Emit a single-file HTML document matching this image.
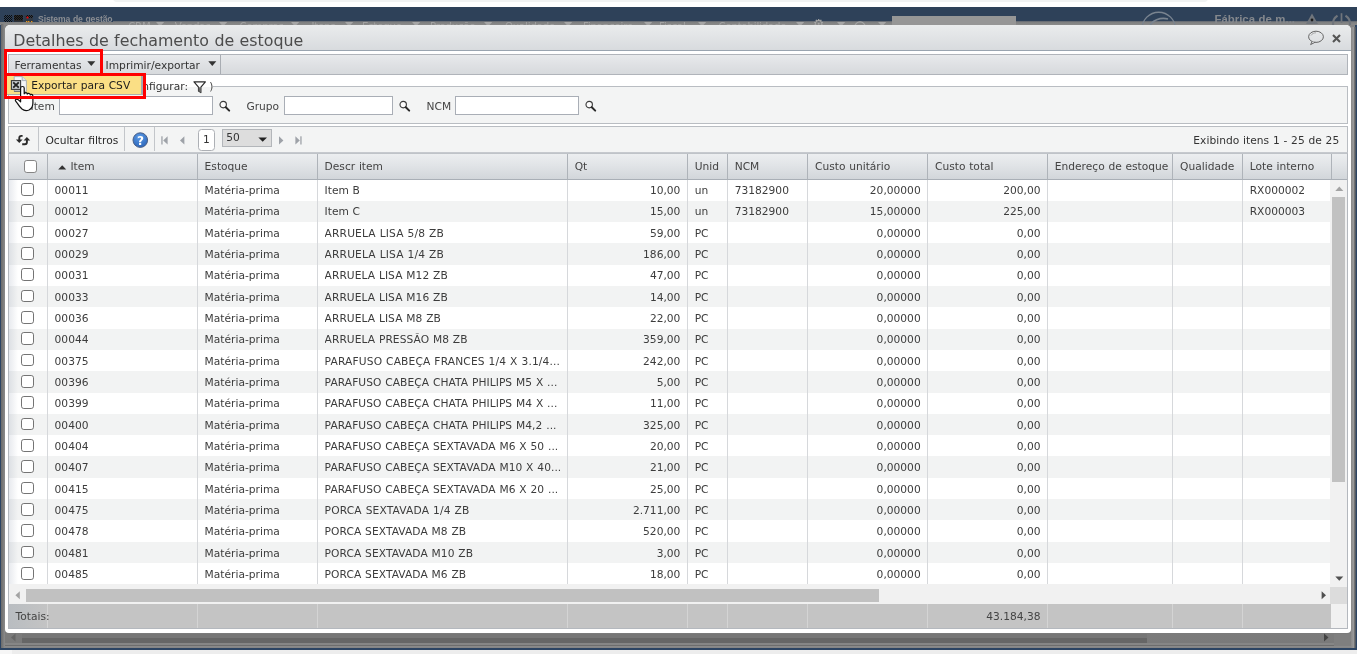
<!DOCTYPE html>
<html lang="pt-BR"><head><meta charset="utf-8"><title>Detalhes de fechamento de estoque</title>
<style>
html,body{margin:0;padding:0}
body{width:1357px;height:654px;overflow:hidden;position:relative;background:#fff;font-family:"DejaVu Sans","Liberation Sans",sans-serif;font-size:10.67px;word-spacing:.36px;color:#3c3c3c}
.abs,.abs *{position:absolute}
div{position:absolute;box-sizing:border-box;white-space:nowrap}
svg{position:absolute;overflow:visible}
.t{line-height:14px;height:14px}
.cell{height:22.8px;line-height:22.8px;overflow:hidden}
.vl{width:1px;background:#d6d8db}
.cb{width:12.9px;height:12.6px;border:1.2px solid #747474;border-radius:2.8px;background:#fff}
.hsep{width:1px;background:#c3c6ca}
</style></head><body>
<div id="wrap" style="left:0;top:0;width:1357px;height:654px;will-change:transform">

<div style="left:0;top:0;width:1357px;height:7px;background:#fff"></div>
<div style="left:113px;top:-6px;width:1095px;height:7.8px;background:#f1f3f3;border-radius:6px"></div>
<div style="left:0;top:6.8px;width:1357px;height:643.2px;background:#2c4463"></div>
<div style="left:1.3px;top:6.8px;width:1354px;height:641.6px;background:#848484"></div>
<div id="topbar" style="left:0;top:6.8px;width:1357px;height:13.8px;background:#2e4159"></div>
<div style="left:0;top:20.5px;width:1357px;height:4.5px;background:linear-gradient(#59616d,#7e7f80 28%,#8b8b8b)"></div>
<div style="left:0;top:20px;width:113px;height:2.4px;background:#2e4159"></div>
<div style="left:38px;top:13px;font-size:8.6px;line-height:12px;color:#8b8e93;font-family:'Liberation Sans',sans-serif;font-weight:bold;letter-spacing:-0.1px">Sistema de gestão</div>
<svg style="left:3px;top:8px" width="32" height="16" viewBox="3 8 32 16"><defs><pattern id="dt" width="2" height="2" patternUnits="userSpaceOnUse"><rect width="1" height="1" fill="#0c0c0c"/><rect x="1" y="1" width="1" height="1" fill="#0c0c0c"/></pattern></defs><rect x="4" y="15" width="8.4" height="7" fill="url(#dt)"/><rect x="14" y="15" width="9" height="6.6" fill="#2a2a2a"/><rect x="14" y="15" width="9" height="5" fill="url(#dt)"/><rect x="24.4" y="15" width="8.6" height="7" fill="#333a44"/><rect x="26" y="15" width="7" height="3" fill="url(#dt)"/><rect x="26.6" y="16.6" width="1.8" height="1.8" fill="#f00"/><rect x="26" y="21" width="1.4" height="1.2" fill="#e8981c"/><rect x="28" y="21" width="1.4" height="1.2" fill="#e8981c"/><rect x="31" y="21" width="1.4" height="1.2" fill="#e8981c"/></svg>
<div style="left:128.2px;top:20px;font-size:10.2px;line-height:13px;color:#a2a2a2;letter-spacing:-0.2px">CRM</div>
<svg style="left:155.8px;top:22px" width="9" height="6"><path d="M0 0 H8.2 L4.1 4.6Z" fill="#a6a6a6"/></svg>
<div style="left:174.8px;top:20px;font-size:10.2px;line-height:13px;color:#a2a2a2;letter-spacing:-0.2px">Vendas</div>
<svg style="left:219.2px;top:22px" width="9" height="6"><path d="M0 0 H8.2 L4.1 4.6Z" fill="#a6a6a6"/></svg>
<div style="left:239.6px;top:20px;font-size:10.2px;line-height:13px;color:#a2a2a2;letter-spacing:-0.2px">Compras</div>
<svg style="left:291.2px;top:22px" width="9" height="6"><path d="M0 0 H8.2 L4.1 4.6Z" fill="#a6a6a6"/></svg>
<div style="left:311.4px;top:20px;font-size:10.2px;line-height:13px;color:#a2a2a2;letter-spacing:-0.2px">Itens</div>
<svg style="left:345px;top:22px" width="9" height="6"><path d="M0 0 H8.2 L4.1 4.6Z" fill="#a6a6a6"/></svg>
<div style="left:362px;top:20px;font-size:10.2px;line-height:13px;color:#a2a2a2;letter-spacing:-0.2px">Estoque</div>
<svg style="left:411.5px;top:22px" width="9" height="6"><path d="M0 0 H8.2 L4.1 4.6Z" fill="#a6a6a6"/></svg>
<div style="left:430px;top:20px;font-size:10.2px;line-height:13px;color:#a2a2a2;letter-spacing:-0.2px">Produção</div>
<svg style="left:484px;top:22px" width="9" height="6"><path d="M0 0 H8.2 L4.1 4.6Z" fill="#a6a6a6"/></svg>
<div style="left:505px;top:20px;font-size:10.2px;line-height:13px;color:#a2a2a2;letter-spacing:-0.2px">Qualidade</div>
<svg style="left:564px;top:22px" width="9" height="6"><path d="M0 0 H8.2 L4.1 4.6Z" fill="#a6a6a6"/></svg>
<div style="left:583px;top:20px;font-size:10.2px;line-height:13px;color:#a2a2a2;letter-spacing:-0.2px">Financeiro</div>
<svg style="left:643.8px;top:22px" width="9" height="6"><path d="M0 0 H8.2 L4.1 4.6Z" fill="#a6a6a6"/></svg>
<div style="left:659px;top:20px;font-size:10.2px;line-height:13px;color:#a2a2a2;letter-spacing:-0.2px">Fiscal</div>
<svg style="left:698.4px;top:22px" width="9" height="6"><path d="M0 0 H8.2 L4.1 4.6Z" fill="#a6a6a6"/></svg>
<div style="left:718.5px;top:20px;font-size:10.2px;line-height:13px;color:#a2a2a2;letter-spacing:-0.2px">Contabilidade</div>
<svg style="left:796px;top:22px" width="9" height="6"><path d="M0 0 H8.2 L4.1 4.6Z" fill="#a6a6a6"/></svg>
<div style="left:813px;top:17.4px;font-size:12.5px;line-height:13px;color:#a6a6a6">⚙</div>
<svg style="left:837.3px;top:22px" width="9" height="6"><path d="M0 0 H8.2 L4.1 4.6Z" fill="#a6a6a6"/></svg>
<svg style="left:854.4px;top:20.5px" width="12" height="12"><circle cx="6" cy="6" r="5.2" fill="none" stroke="#a6a6a6" stroke-width="1.2"/></svg>
<svg style="left:877.5px;top:22px" width="9" height="6"><path d="M0 0 H8.2 L4.1 4.6Z" fill="#a6a6a6"/></svg>
<div style="left:892px;top:16.2px;width:123.8px;height:14px;background:#969696"></div>
<div style="left:1214.5px;top:12px;font-size:11.4px;line-height:14px;color:#85888d;font-family:'Liberation Sans',sans-serif;font-weight:bold">Fábrica de m...</div>
<svg style="left:1141px;top:11px" width="36" height="20"><circle cx="17.7" cy="18" r="16.8" fill="none" stroke="#7a8490" stroke-width="1.4"/><path d="M8 17 C10 9 20 6 27 8" fill="none" stroke="#7a8490" stroke-width="1.6"/></svg>
<svg style="left:1300px;top:11px" width="56" height="16"><path d="M6 13 L12 2.6 L18 13 Z" fill="#70757c"/><circle cx="12" cy="9" r="1.4" fill="#1c1c1c"/><path d="M37.5 4.6 A10 10 0 0 0 33 14 M45.5 4.6 A10 10 0 0 1 50 14" fill="none" stroke="#70757c" stroke-width="2.2"/><path d="M41.5 2.2 V12" stroke="#70757c" stroke-width="1.7"/></svg>
<div style="left:0;top:650px;width:1357px;height:5px;background:#ededed"></div>
<div style="left:0;top:650px;width:12px;height:5px;background:#f6f6f6"></div>
<div style="left:1.3px;top:630px;width:1353.4px;height:18.4px;background:linear-gradient(#7c7c7c,#7a7a7a 70%,#868686 74%,#868686 84%,#6c6c6c 86%,#8a8a8a 90%,#8a8a8a 97%,#4a4a4a)"></div>
<div style="left:22px;top:637.7px;width:1125px;height:5.2px;background:#666"></div>
<div style="left:22px;top:634px;width:1125px;height:3.7px;background:#767676"></div>
<div style="left:1334px;top:634px;width:17px;height:12px;background:#7f7f7f"></div>
<svg style="left:10px;top:633px" width="8" height="10"><path d="M5.5 0.5 L1 4.5 L5.5 8.5Z" fill="#666"/></svg>
<svg style="left:1323px;top:632.5px" width="8" height="10"><path d="M1 0.5 L5.5 4.5 L1 8.5Z" fill="#444"/></svg>
<div style="left:1.3px;top:24px;width:3.8px;height:624px;background:linear-gradient(90deg,#6a6a6a,#8c8c8c)"></div>
<div style="left:1351.2px;top:27px;width:4.4px;height:621px;background:linear-gradient(90deg,#888,#9a9a9a 55%,#5c5c5c 78%,#46566b)"></div>
<div id="dlg" style="left:5px;top:24.6px;width:1346.3px;height:608.2px;background:#fff;border-radius:5px 5px 4px 4px;overflow:hidden">
<div style="left:0;top:0;width:1347px;height:25.4px;background:linear-gradient(#eaeced,#e3e5e7 40%,#d8dbde)"></div>
<div style="left:0;top:25.2px;width:1347px;height:1.2px;background:#9aa5b0"></div>
</div>
<div style="left:13.2px;top:30.5px;font-size:15.85px;line-height:20px;color:#4c4c4c">Detalhes de fechamento de estoque</div>
<svg style="left:1307px;top:30px" width="18" height="16" viewBox="0 0 18 16"><ellipse cx="9" cy="6.8" rx="7.4" ry="5.6" fill="none" stroke="#666" stroke-width="1"/><path d="M5.2 11.4 L3.6 14.6 L8.2 12.2" fill="#e6e8ea" stroke="#666" stroke-width="1" stroke-linejoin="round"/><path d="M4 5.5 C5 3.6 7 2.8 9 2.8" fill="none" stroke="#999" stroke-width=".8"/></svg>
<svg style="left:1331.5px;top:33.5px" width="9" height="9" viewBox="0 0 9 9"><path d="M1 1 L8 8 M8 1 L1 8" stroke="#555" stroke-width="2.1"/></svg>
<div style="left:8.2px;top:54px;width:1340px;height:20.6px;border:1px solid #b0b4ba;background:linear-gradient(#e8eaec,#dfe1e4 50%,#d7dadd)"></div>
<div class="t" style="left:14.4px;top:58.6px;color:#333">Ferramentas</div>
<svg style="left:87px;top:61px" width="9" height="6"><path d="M0.3 0.3 H8.3 L4.3 5Z" fill="#333"/></svg>
<div class="hsep" style="left:99.5px;top:55px;height:19px;background:#a9adb3"></div>
<div class="t" style="left:105.6px;top:58.6px;color:#333">Imprimir/exportar</div>
<svg style="left:207.5px;top:61px" width="9" height="6"><path d="M0.3 0.3 H8.3 L4.3 5Z" fill="#333"/></svg>
<div class="hsep" style="left:220px;top:55px;height:19px;background:#a9adb3"></div>
<div style="left:8.2px;top:86.4px;width:1340px;height:37.2px;border:1px solid #b9bdc2;background:#f3f4f4"></div>
<div class="t" style="right:1167px;top:79.8px;width:180px;text-align:right;background:linear-gradient(#fff 0,#fff 7.4px,#f3f4f4 7.4px);padding:0 2px;color:#333">Filtros (configurar:</div>
<div class="t" style="left:190px;top:79.8px;width:23.4px;text-align:right;background:linear-gradient(#fff 0,#fff 7.4px,#f3f4f4 7.4px);color:#444">)</div>
<svg style="left:193.2px;top:79.6px" width="14" height="14" viewBox="0 0 14 14"><path d="M1 1.8 H12.4 L7.9 7.2 V12.6 L5.5 11 V7.2 Z" fill="#fff" stroke="#2a2a2a" stroke-width="1.15" stroke-linejoin="round"/><path d="M5.5 7.2 H7.9 V12.6 L5.5 11Z" fill="#666"/></svg>
<div class="t" style="left:30.5px;top:100px;color:#444">Item</div>
<div style="left:59px;top:96.2px;width:154px;height:19.2px;border:1px solid #a9aeb6;background:#fff"></div>
<div class="t" style="left:246.4px;top:100px;color:#444">Grupo</div>
<div style="left:284.2px;top:96.2px;width:108.8px;height:19.2px;border:1px solid #a9aeb6;background:#fff"></div>
<div class="t" style="left:426.6px;top:100px;color:#444">NCM</div>
<div style="left:455.2px;top:96.2px;width:123.8px;height:19.2px;border:1px solid #a9aeb6;background:#fff"></div>
<svg style="left:218.6px;top:100.2px" width="12" height="12" viewBox="0 0 12 12"><circle cx="4.2" cy="4.6" r="3.2" fill="#fdfdfd" stroke="#3c3c3c" stroke-width="1.15"/><path d="M6.8 7.2 L10.2 10.6" stroke="#2a2a2a" stroke-width="2" stroke-linecap="round"/></svg>
<svg style="left:398.8px;top:100.2px" width="12" height="12" viewBox="0 0 12 12"><circle cx="4.2" cy="4.6" r="3.2" fill="#fdfdfd" stroke="#3c3c3c" stroke-width="1.15"/><path d="M6.8 7.2 L10.2 10.6" stroke="#2a2a2a" stroke-width="2" stroke-linecap="round"/></svg>
<svg style="left:585px;top:100.2px" width="12" height="12" viewBox="0 0 12 12"><circle cx="4.2" cy="4.6" r="3.2" fill="#fdfdfd" stroke="#3c3c3c" stroke-width="1.15"/><path d="M6.8 7.2 L10.2 10.6" stroke="#2a2a2a" stroke-width="2" stroke-linecap="round"/></svg>
<div style="left:8.2px;top:126px;width:1340px;height:27.4px;border:1px solid #b9bdc2;border-bottom-color:#c6c9ce;background:#f3f4f4"></div>
<svg style="left:15px;top:134px" width="16" height="12" viewBox="0 0 16 12"><path d="M7.6 1.9 H6.4 Q4.3 1.9 4.3 4 V6" fill="none" stroke="#2a2a2a" stroke-width="1.9"/><path d="M0.9 5.4 H7.6 L4.25 8.9Z" fill="#2a2a2a"/><path d="M7.2 10.3 H9.8 Q11.9 10.3 11.9 8.2 V6" fill="none" stroke="#2a2a2a" stroke-width="1.9"/><path d="M8.6 6.4 H15.2 L11.9 2.9Z" fill="#2a2a2a"/></svg>
<div class="hsep" style="left:38px;top:127px;height:24px"></div>
<div class="t" style="left:45.4px;top:134px;color:#2a2a2a">Ocultar filtros</div>
<div class="hsep" style="left:124px;top:127px;height:24px"></div>
<svg style="left:131.5px;top:132px" width="17" height="17" viewBox="0 0 17 17"><defs><radialGradient id="hg" cx="45%" cy="30%" r="75%"><stop offset="0" stop-color="#5b9be6"/><stop offset="1" stop-color="#2a63b8"/></radialGradient></defs><circle cx="8.3" cy="8.1" r="7.3" fill="url(#hg)" stroke="#4a5f86" stroke-width="1"/><text x="8.4" y="12.6" text-anchor="middle" font-family="DejaVu Sans" font-weight="bold" font-size="12" fill="#fff">?</text></svg>
<div class="hsep" style="left:154px;top:127px;height:24px"></div>
<svg style="left:160.8px;top:135.6px" width="8" height="9"><rect x="0.3" y="0.3" width="1.3" height="8.2" fill="#9ea2a8"/><path d="M6.6 0.3 L2.2 4.4 L6.6 8.5Z" fill="#9ea2a8"/></svg>
<svg style="left:178.8px;top:135.6px" width="8" height="9"><path d="M5.4 0.3 L1 4.4 L5.4 8.5Z" fill="#9ea2a8"/></svg>
<div style="left:198px;top:129.2px;width:17.2px;height:21.4px;border:1px solid #adb0b5;border-radius:3.5px;background:#fff"></div>
<div class="t" style="left:203px;top:133.2px;color:#333">1</div>
<div style="left:222px;top:129.4px;width:49.8px;height:18px;border:1px solid #b3b6ba;background:#dddddd"></div>
<div class="t" style="left:226.2px;top:130.8px;color:#333">50</div>
<svg style="left:258px;top:137.4px" width="11" height="7"><path d="M0.4 0.4 H9 L4.7 4.8Z" fill="#222"/></svg>
<svg style="left:278px;top:135.6px" width="8" height="9"><path d="M1 0.3 L5.4 4.4 L1 8.5Z" fill="#9ea2a8"/></svg>
<svg style="left:295.4px;top:135.6px" width="8" height="9"><path d="M0.4 0.3 L4.8 4.4 L0.4 8.5Z" fill="#9ea2a8"/><rect x="5.3" y="0.3" width="1.3" height="8.2" fill="#9ea2a8"/></svg>
<div class="t" style="right:17.8px;top:134px;color:#333;letter-spacing:0.02px">Exibindo itens 1 - 25 de 25</div>
<div id="grid" style="left:8.2px;top:152.6px;width:1340px;height:476px;border:1px solid #b4b8be;border-top-color:#bfc3c8;background:#fff"></div>
<div style="left:9.4px;top:153.6px;width:1337.8px;height:26px;background:linear-gradient(#eceef0,#e1e4e7 45%,#d2d6da);border-bottom:1px solid #a9afb6"></div>
<div class="hsep" style="left:46.9px;top:153.6px;height:25.4px;background:#aeb3b9"></div>
<svg style="left:57.6px;top:165px" width="9" height="5"><path d="M0.2 4.4 L4.2 0.2 L8.2 4.4Z" fill="#333"/></svg>
<div class="t" style="left:70.4px;top:160px;color:#444">Item</div>
<div class="hsep" style="left:196.9px;top:153.6px;height:25.4px;background:#aeb3b9"></div>
<div class="t" style="left:204.6px;top:160px;color:#444">Estoque</div>
<div class="hsep" style="left:316.9px;top:153.6px;height:25.4px;background:#aeb3b9"></div>
<div class="t" style="left:324.59999999999997px;top:160px;color:#444">Descr item</div>
<div class="hsep" style="left:567.0px;top:153.6px;height:25.4px;background:#aeb3b9"></div>
<div class="t" style="left:574.7px;top:160px;color:#444">Qt</div>
<div class="hsep" style="left:687.0px;top:153.6px;height:25.4px;background:#aeb3b9"></div>
<div class="t" style="left:694.7px;top:160px;color:#444">Unid</div>
<div class="hsep" style="left:727.0px;top:153.6px;height:25.4px;background:#aeb3b9"></div>
<div class="t" style="left:734.7px;top:160px;color:#444">NCM</div>
<div class="hsep" style="left:807.3px;top:153.6px;height:25.4px;background:#aeb3b9"></div>
<div class="t" style="left:815.0px;top:160px;color:#444">Custo unitário</div>
<div class="hsep" style="left:927.3px;top:153.6px;height:25.4px;background:#aeb3b9"></div>
<div class="t" style="left:935.0px;top:160px;color:#444">Custo total</div>
<div class="hsep" style="left:1047.1px;top:153.6px;height:25.4px;background:#aeb3b9"></div>
<div class="t" style="left:1054.8px;top:160px;color:#444">Endereço de estoque</div>
<div class="hsep" style="left:1172.4px;top:153.6px;height:25.4px;background:#aeb3b9"></div>
<div class="t" style="left:1180.1000000000001px;top:160px;color:#444">Qualidade</div>
<div class="hsep" style="left:1242.0px;top:153.6px;height:25.4px;background:#aeb3b9"></div>
<div class="t" style="left:1249.7px;top:160px;color:#444">Lote interno</div>
<div class="hsep" style="left:1330.5px;top:153.6px;height:25.4px;background:#aeb3b9"></div>
<div class="cb" style="left:24px;top:160.2px;border-color:#858585"></div>
<div style="left:9.4px;top:179.50px;width:1321.6px;height:21.60px;background:#fff"></div>
<div class="cb" style="left:21px;top:183.10px"></div>
<div class="cell" style="left:54.6px;width:142.0px;top:179.95px">00011</div>
<div class="cell" style="left:204.6px;width:112.0px;top:179.95px">Matéria-prima</div>
<div class="cell" style="left:324.6px;width:242.1px;top:179.95px">Item B</div>
<div class="cell" style="left:567.5px;width:112.9px;top:179.95px;text-align:right">10,00</div>
<div class="cell" style="left:694.7px;width:32.0px;top:179.95px">un</div>
<div class="cell" style="left:734.7px;width:72.3px;top:179.95px">73182900</div>
<div class="cell" style="left:807.8px;width:112.9px;top:179.95px;text-align:right">20,00000</div>
<div class="cell" style="left:927.8px;width:112.7px;top:179.95px;text-align:right">200,00</div>
<div class="cell" style="left:1249.7px;width:80.5px;top:179.95px">RX000002</div>
<div style="left:9.4px;top:200.80px;width:1321.6px;height:21.60px;background:#f2f3f3"></div>
<div class="cb" style="left:21px;top:204.43px"></div>
<div class="cell" style="left:54.6px;width:142.0px;top:200.95px">00012</div>
<div class="cell" style="left:204.6px;width:112.0px;top:200.95px">Matéria-prima</div>
<div class="cell" style="left:324.6px;width:242.1px;top:200.95px">Item C</div>
<div class="cell" style="left:567.5px;width:112.9px;top:200.95px;text-align:right">15,00</div>
<div class="cell" style="left:694.7px;width:32.0px;top:200.95px">un</div>
<div class="cell" style="left:734.7px;width:72.3px;top:200.95px">73182900</div>
<div class="cell" style="left:807.8px;width:112.9px;top:200.95px;text-align:right">15,00000</div>
<div class="cell" style="left:927.8px;width:112.7px;top:200.95px;text-align:right">225,00</div>
<div class="cell" style="left:1249.7px;width:80.5px;top:200.95px">RX000003</div>
<div style="left:9.4px;top:222.10px;width:1321.6px;height:21.60px;background:#fff"></div>
<div class="cb" style="left:21px;top:225.76px"></div>
<div class="cell" style="left:54.6px;width:142.0px;top:222.95px">00027</div>
<div class="cell" style="left:204.6px;width:112.0px;top:222.95px">Matéria-prima</div>
<div class="cell" style="left:324.6px;width:242.1px;top:222.95px;letter-spacing:0.15px">ARRUELA LISA 5/8 ZB</div>
<div class="cell" style="left:567.5px;width:112.9px;top:222.95px;text-align:right">59,00</div>
<div class="cell" style="left:694.7px;width:32.0px;top:222.95px">PC</div>
<div class="cell" style="left:807.8px;width:112.9px;top:222.95px;text-align:right">0,00000</div>
<div class="cell" style="left:927.8px;width:112.7px;top:222.95px;text-align:right">0,00</div>
<div style="left:9.4px;top:243.40px;width:1321.6px;height:21.60px;background:#f2f3f3"></div>
<div class="cb" style="left:21px;top:247.09px"></div>
<div class="cell" style="left:54.6px;width:142.0px;top:243.95px">00029</div>
<div class="cell" style="left:204.6px;width:112.0px;top:243.95px">Matéria-prima</div>
<div class="cell" style="left:324.6px;width:242.1px;top:243.95px;letter-spacing:0.15px">ARRUELA LISA 1/4 ZB</div>
<div class="cell" style="left:567.5px;width:112.9px;top:243.95px;text-align:right">186,00</div>
<div class="cell" style="left:694.7px;width:32.0px;top:243.95px">PC</div>
<div class="cell" style="left:807.8px;width:112.9px;top:243.95px;text-align:right">0,00000</div>
<div class="cell" style="left:927.8px;width:112.7px;top:243.95px;text-align:right">0,00</div>
<div style="left:9.4px;top:264.70px;width:1321.6px;height:21.60px;background:#fff"></div>
<div class="cb" style="left:21px;top:268.42px"></div>
<div class="cell" style="left:54.6px;width:142.0px;top:264.95px">00031</div>
<div class="cell" style="left:204.6px;width:112.0px;top:264.95px">Matéria-prima</div>
<div class="cell" style="left:324.6px;width:242.1px;top:264.95px;letter-spacing:0.06px">ARRUELA LISA M12 ZB</div>
<div class="cell" style="left:567.5px;width:112.9px;top:264.95px;text-align:right">47,00</div>
<div class="cell" style="left:694.7px;width:32.0px;top:264.95px">PC</div>
<div class="cell" style="left:807.8px;width:112.9px;top:264.95px;text-align:right">0,00000</div>
<div class="cell" style="left:927.8px;width:112.7px;top:264.95px;text-align:right">0,00</div>
<div style="left:9.4px;top:286.00px;width:1321.6px;height:21.60px;background:#f2f3f3"></div>
<div class="cb" style="left:21px;top:289.75px"></div>
<div class="cell" style="left:54.6px;width:142.0px;top:286.95px">00033</div>
<div class="cell" style="left:204.6px;width:112.0px;top:286.95px">Matéria-prima</div>
<div class="cell" style="left:324.6px;width:242.1px;top:286.95px;letter-spacing:0.06px">ARRUELA LISA M16 ZB</div>
<div class="cell" style="left:567.5px;width:112.9px;top:286.95px;text-align:right">14,00</div>
<div class="cell" style="left:694.7px;width:32.0px;top:286.95px">PC</div>
<div class="cell" style="left:807.8px;width:112.9px;top:286.95px;text-align:right">0,00000</div>
<div class="cell" style="left:927.8px;width:112.7px;top:286.95px;text-align:right">0,00</div>
<div style="left:9.4px;top:307.30px;width:1321.6px;height:21.60px;background:#fff"></div>
<div class="cb" style="left:21px;top:311.08px"></div>
<div class="cell" style="left:54.6px;width:142.0px;top:307.95px">00036</div>
<div class="cell" style="left:204.6px;width:112.0px;top:307.95px">Matéria-prima</div>
<div class="cell" style="left:324.6px;width:242.1px;top:307.95px;letter-spacing:0.06px">ARRUELA LISA M8 ZB</div>
<div class="cell" style="left:567.5px;width:112.9px;top:307.95px;text-align:right">22,00</div>
<div class="cell" style="left:694.7px;width:32.0px;top:307.95px">PC</div>
<div class="cell" style="left:807.8px;width:112.9px;top:307.95px;text-align:right">0,00000</div>
<div class="cell" style="left:927.8px;width:112.7px;top:307.95px;text-align:right">0,00</div>
<div style="left:9.4px;top:328.60px;width:1321.6px;height:21.60px;background:#f2f3f3"></div>
<div class="cb" style="left:21px;top:332.41px"></div>
<div class="cell" style="left:54.6px;width:142.0px;top:328.95px">00044</div>
<div class="cell" style="left:204.6px;width:112.0px;top:328.95px">Matéria-prima</div>
<div class="cell" style="left:324.6px;width:242.1px;top:328.95px;letter-spacing:0.06px">ARRUELA PRESSÃO M8 ZB</div>
<div class="cell" style="left:567.5px;width:112.9px;top:328.95px;text-align:right">359,00</div>
<div class="cell" style="left:694.7px;width:32.0px;top:328.95px">PC</div>
<div class="cell" style="left:807.8px;width:112.9px;top:328.95px;text-align:right">0,00000</div>
<div class="cell" style="left:927.8px;width:112.7px;top:328.95px;text-align:right">0,00</div>
<div style="left:9.4px;top:349.90px;width:1321.6px;height:21.60px;background:#fff"></div>
<div class="cb" style="left:21px;top:353.74px"></div>
<div class="cell" style="left:54.6px;width:142.0px;top:350.95px">00375</div>
<div class="cell" style="left:204.6px;width:112.0px;top:350.95px">Matéria-prima</div>
<div class="cell" style="left:324.6px;width:242.1px;top:350.95px;letter-spacing:0.15px">PARAFUSO CABEÇA FRANCES 1/4 X 3.1/4...</div>
<div class="cell" style="left:567.5px;width:112.9px;top:350.95px;text-align:right">242,00</div>
<div class="cell" style="left:694.7px;width:32.0px;top:350.95px">PC</div>
<div class="cell" style="left:807.8px;width:112.9px;top:350.95px;text-align:right">0,00000</div>
<div class="cell" style="left:927.8px;width:112.7px;top:350.95px;text-align:right">0,00</div>
<div style="left:9.4px;top:371.20px;width:1321.6px;height:21.60px;background:#f2f3f3"></div>
<div class="cb" style="left:21px;top:375.07px"></div>
<div class="cell" style="left:54.6px;width:142.0px;top:371.95px">00396</div>
<div class="cell" style="left:204.6px;width:112.0px;top:371.95px">Matéria-prima</div>
<div class="cell" style="left:324.6px;width:242.1px;top:371.95px;letter-spacing:0.06px">PARAFUSO CABEÇA CHATA PHILIPS M5 X ...</div>
<div class="cell" style="left:567.5px;width:112.9px;top:371.95px;text-align:right">5,00</div>
<div class="cell" style="left:694.7px;width:32.0px;top:371.95px">PC</div>
<div class="cell" style="left:807.8px;width:112.9px;top:371.95px;text-align:right">0,00000</div>
<div class="cell" style="left:927.8px;width:112.7px;top:371.95px;text-align:right">0,00</div>
<div style="left:9.4px;top:392.50px;width:1321.6px;height:21.60px;background:#fff"></div>
<div class="cb" style="left:21px;top:396.40px"></div>
<div class="cell" style="left:54.6px;width:142.0px;top:392.95px">00399</div>
<div class="cell" style="left:204.6px;width:112.0px;top:392.95px">Matéria-prima</div>
<div class="cell" style="left:324.6px;width:242.1px;top:392.95px;letter-spacing:0.06px">PARAFUSO CABEÇA CHATA PHILIPS M4 X ...</div>
<div class="cell" style="left:567.5px;width:112.9px;top:392.95px;text-align:right">11,00</div>
<div class="cell" style="left:694.7px;width:32.0px;top:392.95px">PC</div>
<div class="cell" style="left:807.8px;width:112.9px;top:392.95px;text-align:right">0,00000</div>
<div class="cell" style="left:927.8px;width:112.7px;top:392.95px;text-align:right">0,00</div>
<div style="left:9.4px;top:413.80px;width:1321.6px;height:21.60px;background:#f2f3f3"></div>
<div class="cb" style="left:21px;top:417.73px"></div>
<div class="cell" style="left:54.6px;width:142.0px;top:414.95px">00400</div>
<div class="cell" style="left:204.6px;width:112.0px;top:414.95px">Matéria-prima</div>
<div class="cell" style="left:324.6px;width:242.1px;top:414.95px;letter-spacing:0.06px">PARAFUSO CABEÇA CHATA PHILIPS M4,2 ...</div>
<div class="cell" style="left:567.5px;width:112.9px;top:414.95px;text-align:right">325,00</div>
<div class="cell" style="left:694.7px;width:32.0px;top:414.95px">PC</div>
<div class="cell" style="left:807.8px;width:112.9px;top:414.95px;text-align:right">0,00000</div>
<div class="cell" style="left:927.8px;width:112.7px;top:414.95px;text-align:right">0,00</div>
<div style="left:9.4px;top:435.10px;width:1321.6px;height:21.60px;background:#fff"></div>
<div class="cb" style="left:21px;top:439.06px"></div>
<div class="cell" style="left:54.6px;width:142.0px;top:435.95px">00404</div>
<div class="cell" style="left:204.6px;width:112.0px;top:435.95px">Matéria-prima</div>
<div class="cell" style="left:324.6px;width:242.1px;top:435.95px;letter-spacing:0.06px">PARAFUSO CABEÇA SEXTAVADA M6 X 50 ...</div>
<div class="cell" style="left:567.5px;width:112.9px;top:435.95px;text-align:right">20,00</div>
<div class="cell" style="left:694.7px;width:32.0px;top:435.95px">PC</div>
<div class="cell" style="left:807.8px;width:112.9px;top:435.95px;text-align:right">0,00000</div>
<div class="cell" style="left:927.8px;width:112.7px;top:435.95px;text-align:right">0,00</div>
<div style="left:9.4px;top:456.40px;width:1321.6px;height:21.60px;background:#f2f3f3"></div>
<div class="cb" style="left:21px;top:460.39px"></div>
<div class="cell" style="left:54.6px;width:142.0px;top:456.95px">00407</div>
<div class="cell" style="left:204.6px;width:112.0px;top:456.95px">Matéria-prima</div>
<div class="cell" style="left:324.6px;width:242.1px;top:456.95px;letter-spacing:0.06px">PARAFUSO CABEÇA SEXTAVADA M10 X 40...</div>
<div class="cell" style="left:567.5px;width:112.9px;top:456.95px;text-align:right">21,00</div>
<div class="cell" style="left:694.7px;width:32.0px;top:456.95px">PC</div>
<div class="cell" style="left:807.8px;width:112.9px;top:456.95px;text-align:right">0,00000</div>
<div class="cell" style="left:927.8px;width:112.7px;top:456.95px;text-align:right">0,00</div>
<div style="left:9.4px;top:477.70px;width:1321.6px;height:21.60px;background:#fff"></div>
<div class="cb" style="left:21px;top:481.72px"></div>
<div class="cell" style="left:54.6px;width:142.0px;top:478.95px">00415</div>
<div class="cell" style="left:204.6px;width:112.0px;top:478.95px">Matéria-prima</div>
<div class="cell" style="left:324.6px;width:242.1px;top:478.95px;letter-spacing:0.06px">PARAFUSO CABEÇA SEXTAVADA M6 X 20 ...</div>
<div class="cell" style="left:567.5px;width:112.9px;top:478.95px;text-align:right">25,00</div>
<div class="cell" style="left:694.7px;width:32.0px;top:478.95px">PC</div>
<div class="cell" style="left:807.8px;width:112.9px;top:478.95px;text-align:right">0,00000</div>
<div class="cell" style="left:927.8px;width:112.7px;top:478.95px;text-align:right">0,00</div>
<div style="left:9.4px;top:499.00px;width:1321.6px;height:21.60px;background:#f2f3f3"></div>
<div class="cb" style="left:21px;top:503.05px"></div>
<div class="cell" style="left:54.6px;width:142.0px;top:499.95px">00475</div>
<div class="cell" style="left:204.6px;width:112.0px;top:499.95px">Matéria-prima</div>
<div class="cell" style="left:324.6px;width:242.1px;top:499.95px;letter-spacing:0.15px">PORCA SEXTAVADA 1/4 ZB</div>
<div class="cell" style="left:567.5px;width:112.9px;top:499.95px;text-align:right">2.711,00</div>
<div class="cell" style="left:694.7px;width:32.0px;top:499.95px">PC</div>
<div class="cell" style="left:807.8px;width:112.9px;top:499.95px;text-align:right">0,00000</div>
<div class="cell" style="left:927.8px;width:112.7px;top:499.95px;text-align:right">0,00</div>
<div style="left:9.4px;top:520.30px;width:1321.6px;height:21.60px;background:#fff"></div>
<div class="cb" style="left:21px;top:524.38px"></div>
<div class="cell" style="left:54.6px;width:142.0px;top:520.95px">00478</div>
<div class="cell" style="left:204.6px;width:112.0px;top:520.95px">Matéria-prima</div>
<div class="cell" style="left:324.6px;width:242.1px;top:520.95px;letter-spacing:0.06px">PORCA SEXTAVADA M8 ZB</div>
<div class="cell" style="left:567.5px;width:112.9px;top:520.95px;text-align:right">520,00</div>
<div class="cell" style="left:694.7px;width:32.0px;top:520.95px">PC</div>
<div class="cell" style="left:807.8px;width:112.9px;top:520.95px;text-align:right">0,00000</div>
<div class="cell" style="left:927.8px;width:112.7px;top:520.95px;text-align:right">0,00</div>
<div style="left:9.4px;top:541.60px;width:1321.6px;height:21.60px;background:#f2f3f3"></div>
<div class="cb" style="left:21px;top:545.71px"></div>
<div class="cell" style="left:54.6px;width:142.0px;top:542.95px">00481</div>
<div class="cell" style="left:204.6px;width:112.0px;top:542.95px">Matéria-prima</div>
<div class="cell" style="left:324.6px;width:242.1px;top:542.95px;letter-spacing:0.06px">PORCA SEXTAVADA M10 ZB</div>
<div class="cell" style="left:567.5px;width:112.9px;top:542.95px;text-align:right">3,00</div>
<div class="cell" style="left:694.7px;width:32.0px;top:542.95px">PC</div>
<div class="cell" style="left:807.8px;width:112.9px;top:542.95px;text-align:right">0,00000</div>
<div class="cell" style="left:927.8px;width:112.7px;top:542.95px;text-align:right">0,00</div>
<div style="left:9.4px;top:562.90px;width:1321.6px;height:21.60px;background:#fff"></div>
<div class="cb" style="left:21px;top:567.04px"></div>
<div class="cell" style="left:54.6px;width:142.0px;top:563.95px">00485</div>
<div class="cell" style="left:204.6px;width:112.0px;top:563.95px">Matéria-prima</div>
<div class="cell" style="left:324.6px;width:242.1px;top:563.95px;letter-spacing:0.06px">PORCA SEXTAVADA M6 ZB</div>
<div class="cell" style="left:567.5px;width:112.9px;top:563.95px;text-align:right">18,00</div>
<div class="cell" style="left:694.7px;width:32.0px;top:563.95px">PC</div>
<div class="cell" style="left:807.8px;width:112.9px;top:563.95px;text-align:right">0,00000</div>
<div class="cell" style="left:927.8px;width:112.7px;top:563.95px;text-align:right">0,00</div>
<div style="left:9.2px;top:179.5px;width:9px;height:404.8px;background:linear-gradient(90deg,rgba(110,125,150,.16),rgba(110,125,150,0))"></div>
<div class="vl" style="left:46.9px;top:179.5px;height:404.8px"></div>
<div class="vl" style="left:196.9px;top:179.5px;height:404.8px"></div>
<div class="vl" style="left:316.9px;top:179.5px;height:404.8px"></div>
<div class="vl" style="left:567.0px;top:179.5px;height:404.8px"></div>
<div class="vl" style="left:687.0px;top:179.5px;height:404.8px"></div>
<div class="vl" style="left:727.0px;top:179.5px;height:404.8px"></div>
<div class="vl" style="left:807.3px;top:179.5px;height:404.8px"></div>
<div class="vl" style="left:927.3px;top:179.5px;height:404.8px"></div>
<div class="vl" style="left:1047.1px;top:179.5px;height:404.8px"></div>
<div class="vl" style="left:1172.4px;top:179.5px;height:404.8px"></div>
<div class="vl" style="left:1242.0px;top:179.5px;height:404.8px"></div>
<div style="left:1330.2px;top:179.5px;width:17px;height:408px;background:#f1f1f1"></div>
<div style="left:1332.2px;top:197.2px;width:12.8px;height:284.6px;background:#c1c1c1"></div>
<svg style="left:1334.5px;top:186px" width="9" height="6"><path d="M0.3 5 L4.3 0.6 L8.3 5Z" fill="#a3a3a3"/></svg>
<svg style="left:1334.5px;top:575.5px" width="9" height="6"><path d="M0.3 0.4 H8.3 L4.3 4.8Z" fill="#505050"/></svg>
<div style="left:9.2px;top:584.3px;width:1321px;height:20px;background:#f1f1f1"></div>
<div style="left:26.2px;top:589px;width:852.6px;height:12.6px;background:#c1c1c1"></div>
<svg style="left:14.5px;top:590.5px" width="6" height="9"><path d="M4.8 0.3 L0.4 4.3 L4.8 8.3Z" fill="#a3a3a3"/></svg>
<svg style="left:1320.5px;top:590.5px" width="6" height="9"><path d="M0.6 0.3 L5 4.3 L0.6 8.3Z" fill="#505050"/></svg>
<div style="left:1330.2px;top:587px;width:17px;height:17.4px;background:#dcdcdc"></div>
<div style="left:9.2px;top:603.6px;width:1338px;height:1px;background:#b4b8be"></div>
<div style="left:9.4px;top:604.4px;width:1321.6px;height:23.4px;background:linear-gradient(90deg,#b9bdc1,#c4c4c4 40px)"></div>
<div style="left:1330.6px;top:604.4px;width:16.6px;height:23.4px;background:#f1f1f1"></div>
<div class="vl" style="left:46.9px;top:604.4px;height:23.4px;background:#d4d4d4"></div>
<div class="vl" style="left:196.9px;top:604.4px;height:23.4px;background:#d4d4d4"></div>
<div class="vl" style="left:316.9px;top:604.4px;height:23.4px;background:#d4d4d4"></div>
<div class="vl" style="left:567.0px;top:604.4px;height:23.4px;background:#d4d4d4"></div>
<div class="vl" style="left:687.0px;top:604.4px;height:23.4px;background:#d4d4d4"></div>
<div class="vl" style="left:727.0px;top:604.4px;height:23.4px;background:#d4d4d4"></div>
<div class="vl" style="left:807.3px;top:604.4px;height:23.4px;background:#d4d4d4"></div>
<div class="vl" style="left:927.3px;top:604.4px;height:23.4px;background:#d4d4d4"></div>
<div class="vl" style="left:1047.1px;top:604.4px;height:23.4px;background:#d4d4d4"></div>
<div class="vl" style="left:1172.4px;top:604.4px;height:23.4px;background:#d4d4d4"></div>
<div class="vl" style="left:1242.0px;top:604.4px;height:23.4px;background:#d4d4d4"></div>
<div class="t" style="left:15.6px;top:609.8px;color:#444">Totais:</div>
<div class="t" style="left:927.8px;width:112.7px;top:609.8px;text-align:right;color:#444">43.184,38</div>
<div style="left:7.4px;top:75.6px;width:135.2px;height:19.8px;background:#fbdf85;border-right:2.2px solid #a4a9b0;border-bottom:1.2px solid #aeb0a6"></div>
<div class="t" style="left:31.2px;top:79.2px;color:#1c1c1c">Exportar para CSV</div>
<svg style="left:10px;top:76px" width="18" height="18" viewBox="0 0 18 18"><path d="M4.2 0.6 H12.2 L16.4 4.6 V15.4 H4.2Z" fill="#f4f6f8" stroke="#9aa3ad" stroke-width=".8"/><path d="M12.2 0.6 V4.6 H16.4" fill="#dfe4e9" stroke="#9aa3ad" stroke-width=".8"/><rect x="1.4" y="4.6" width="9.2" height="8.8" fill="#c9cdd1" stroke="#3a3a3a" stroke-width="1.1"/><path d="M3.2 6.4 L8.8 11.6 M8.8 6.4 L3.2 11.6" stroke="#222" stroke-width="1.9"/><path d="M4 15.2 H11" stroke="#555" stroke-width="1"/></svg>
<svg style="left:0;top:0" width="60" height="120" viewBox="0 0 60 120"><path d="M20.6 99.5 V87.9 Q20.6 86.5 22.4 86.5 Q24.2 86.5 24.2 87.9 V93.8 Q24.4 92.7 25.8 92.7 Q27.2 92.8 27.3 94.2 Q27.5 93.2 28.8 93.3 Q30.2 93.4 30.3 95 Q30.6 94.2 31.7 94.4 Q32.9 94.7 32.9 96.2 V103 Q32.9 108 29 110 Q25 111.6 22 109 Q19 106 17.6 103.6 L15.7 101.2 Q14.8 99.8 16.2 99.3 Q17.4 99 18.4 99.9 L20.6 101.8 Z" fill="#fff" stroke="#111" stroke-width="1.2" stroke-linejoin="round"/></svg>
<div style="left:4px;top:49px;width:99px;height:25px;border:3px solid #f00;border-bottom:0"></div>
<div style="left:4px;top:72.8px;width:142px;height:26px;border:3px solid #f00"></div>
</div></body></html>
